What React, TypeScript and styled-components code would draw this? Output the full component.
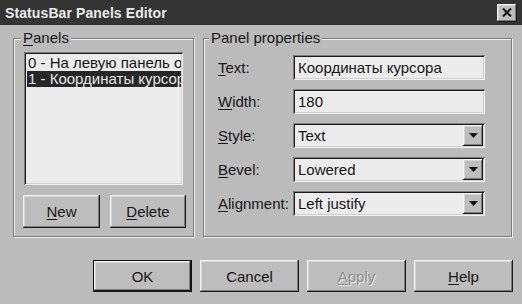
import React from 'react';
import styled, { createGlobalStyle, css } from 'styled-components';

const GlobalStyle = createGlobalStyle`
  html, body {
    margin: 0;
    padding: 0;
    background: #bbbbbb;
  }
  body {
    font-family: "Liberation Sans", Arial, sans-serif;
  }
`;

const raised = css`
  background: #bdbdbd;
  box-shadow:
    inset -1px -1px 0 #1a1a1a,
    inset 1px 1px 0 #f2f2f2,
    inset -2px -2px 0 #7c7c7c,
    inset 2px 2px 0 #d6d6d6;
`;

const sunken = css`
  box-shadow:
    inset 1px 1px 0 #7c7c7c,
    inset -1px -1px 0 #f2f2f2,
    inset 2px 2px 0 #1a1a1a,
    inset -2px -2px 0 #d0d0d0;
`;

const Window = styled.div`
  width: 522px;
  height: 304px;
  background: #bbbbbb;
  display: flex;
  flex-direction: column;
  color: #161616;
  font-size: 15px;
  overflow: hidden;
`;

const TitleBar = styled.div`
  height: 25px;
  background: #343434;
  display: flex;
  align-items: center;
  justify-content: space-between;
  padding: 0 5px 0 5px;
`;

const Title = styled.span`
  color: #ececec;
  font-weight: bold;
  font-size: 14px;
  letter-spacing: 0.1px;
`;

const CloseButton = styled.div`
  ${raised};
  width: 20px;
  height: 18px;
  display: flex;
  align-items: center;
  justify-content: center;
`;

const Body = styled.div`
  padding: 13px 9px 0 13px;
  display: flex;
  flex-direction: column;
`;

const GroupsRow = styled.div`
  display: flex;
  gap: 9px;
  height: 199px;
`;

const GroupBox = styled.div<{ $width: number; $padTop: number; $padLeft: number }>`
  position: relative;
  box-sizing: border-box;
  width: ${({ $width }) => $width}px;
  height: 100%;
  border: 1px solid #7a7a7a;
  box-shadow: inset 1px 1px 0 #f0f0f0, 1px 1px 0 #f0f0f0;
  padding: ${({ $padTop, $padLeft }) => `${$padTop}px 0 0 ${$padLeft}px`};
`;

const Caption = styled.span<{ $left: number }>`
  position: absolute;
  top: -9px;
  left: ${({ $left }) => $left}px;
  background: #bbbbbb;
  padding: 0 2px;
  line-height: 16px;
  font-size: 15px;
`;

const Key = styled.span`
  text-decoration: underline;
  text-underline-offset: 2px;
`;

const ListBox = styled.div`
  ${sunken};
  background: #ececec;
  box-sizing: border-box;
  width: 159px;
  height: 133px;
  padding: 3px 2px 2px 3px;
  overflow: hidden;
`;

const ListItem = styled.div<{ $selected?: boolean }>`
  height: 16px;
  line-height: 16px;
  white-space: nowrap;
  overflow: hidden;
  padding-left: 1px;
  background: ${({ $selected }) => ($selected ? '#262626' : 'transparent')};
  color: ${({ $selected }) => ($selected ? '#e6e6e6' : '#161616')};
`;

const ListButtons = styled.div`
  display: flex;
  gap: 10px;
  margin-top: 10px;
  margin-left: -1px;
`;

const Button = styled.div<{ $width: number; $height: number; $default?: boolean; $disabled?: boolean }>`
  ${raised};
  box-sizing: border-box;
  width: ${({ $width }) => $width}px;
  height: ${({ $height }) => $height}px;
  display: flex;
  align-items: center;
  justify-content: center;
  font-size: 15px;
  ${({ $default }) =>
    $default &&
    css`
      border: 1px solid #111;
    `}
  ${({ $disabled }) =>
    $disabled &&
    css`
      color: #8c8c8c;
      text-shadow: 1px 1px 0 #ececec;
    `}
`;

const PropsGrid = styled.div`
  display: grid;
  grid-template-columns: 75px 192px;
  grid-auto-rows: 25px;
  row-gap: 9px;
  align-items: center;
`;

const Label = styled.span`
  white-space: nowrap;
`;

const Field = styled.div`
  ${sunken};
  background: #ececec;
  height: 25px;
  box-sizing: border-box;
  display: flex;
  align-items: center;
  padding: 0 2px 0 5px;
  white-space: nowrap;
  overflow: hidden;
`;

const FieldText = styled.span`
  flex: 1;
`;

const DropButton = styled.div`
  ${raised};
  width: 20px;
  height: 21px;
  display: flex;
  align-items: center;
  justify-content: center;
`;

const ButtonRow = styled.div`
  display: flex;
  justify-content: flex-end;
  gap: 8px;
  margin-top: 23px;
`;

const Arrow = () => (
  <svg width="9" height="5" viewBox="0 0 9 5">
    <path d="M0 0 H9 L4.5 5 Z" fill="#111" />
  </svg>
);

const CloseIcon = () => (
  <svg width="10" height="9" viewBox="0 0 10 9">
    <path d="M1 0.5 L9 8.5 M9 0.5 L1 8.5" stroke="#111" strokeWidth="2" />
  </svg>
);

type PropRow = { key: string; rest: string; value: string; combo?: boolean };

const rows: PropRow[] = [
  { key: 'T', rest: 'ext:', value: 'Координаты курсора' },
  { key: 'W', rest: 'idth:', value: '180' },
  { key: 'S', rest: 'tyle:', value: 'Text', combo: true },
  { key: 'B', rest: 'evel:', value: 'Lowered', combo: true },
  { key: 'A', rest: 'lignment:', value: 'Left justify', combo: true },
];

const App = () => (
  <>
    <GlobalStyle />
    <Window>
      <TitleBar>
        <Title>StatusBar Panels Editor</Title>
        <CloseButton>
          <CloseIcon />
        </CloseButton>
      </TitleBar>
      <Body>
        <GroupsRow>
          <GroupBox $width={181} $padTop={13} $padLeft={10}>
            <Caption $left={7}>
              <Key>P</Key>anels
            </Caption>
            <ListBox>
              <ListItem>0 - На левую панель о</ListItem>
              <ListItem $selected>1 - Координаты курсора</ListItem>
            </ListBox>
            <ListButtons>
              <Button $width={77} $height={33}>
                <span>
                  <Key>N</Key>ew
                </span>
              </Button>
              <Button $width={76} $height={33}>
                <span>
                  <Key>D</Key>elete
                </span>
              </Button>
            </ListButtons>
          </GroupBox>
          <GroupBox $width={309} $padTop={16} $padLeft={14}>
            <Caption $left={5}>Panel properties</Caption>
            <PropsGrid>
              {rows.map((row) => (
                <React.Fragment key={row.key}>
                  <Label>
                    <Key>{row.key}</Key>
                    {row.rest}
                  </Label>
                  <Field>
                    <FieldText>{row.value}</FieldText>
                    {row.combo && (
                      <DropButton>
                        <Arrow />
                      </DropButton>
                    )}
                  </Field>
                </React.Fragment>
              ))}
            </PropsGrid>
          </GroupBox>
        </GroupsRow>
        <ButtonRow>
          <Button $width={99} $height={32} $default>
            OK
          </Button>
          <Button $width={99} $height={32}>
            Cancel
          </Button>
          <Button $width={99} $height={32} $disabled>
            <span>
              <Key>A</Key>pply
            </span>
          </Button>
          <Button $width={99} $height={32}>
            <span>
              <Key>H</Key>elp
            </span>
          </Button>
        </ButtonRow>
      </Body>
    </Window>
  </>
);

export default App;
